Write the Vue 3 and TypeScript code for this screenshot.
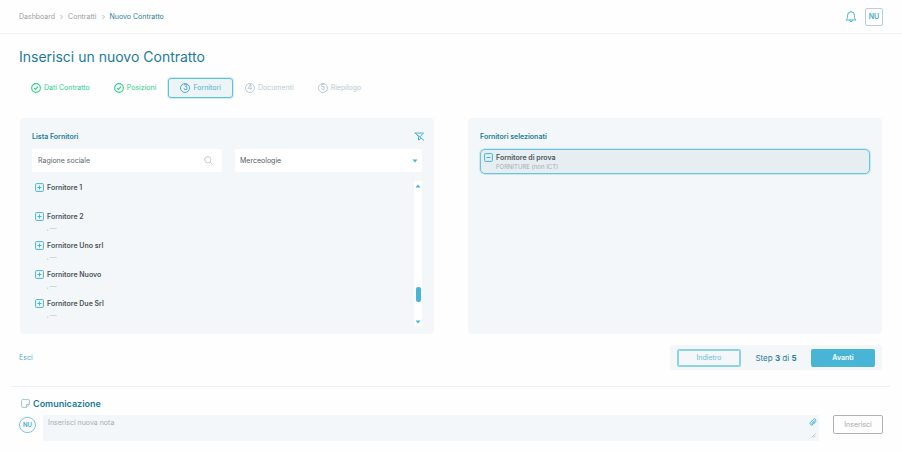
<script setup lang="ts">
import { ref } from 'vue'

interface Step {
  label: string
  state: 'done' | 'active' | 'todo'
}

interface Supplier {
  name: string
  detail: string
}

const steps: Step[] = [
  { label: 'Dati Contratto', state: 'done' },
  { label: 'Posizioni', state: 'done' },
  { label: 'Fornitori', state: 'active' },
  { label: 'Documenti', state: 'todo' },
  { label: 'Riepilogo', state: 'todo' },
]

const suppliers: Supplier[] = [
  { name: 'Fornitore 1', detail: '' },
  { name: 'Fornitore 2', detail: ', ---' },
  { name: 'Fornitore Uno srl', detail: ', ---' },
  { name: 'Fornitore Nuovo', detail: ', ---' },
  { name: 'Fornitore Due Srl', detail: ', ---' },
]

const selected: Supplier[] = [{ name: 'Fornitore di prova', detail: 'FORNITURE (non ICT)' }]

const search = ref('')
const category = ref('Merceologie')
const note = ref('')
</script>

<template>
  <div class="page">
    <header class="topbar">
      <nav class="crumbs" aria-label="Percorso">
        <a href="#">Dashboard</a>
        <svg class="chevron" viewBox="0 0 4 6"><path d="M1 1l2 2-2 2" /></svg>
        <a href="#">Contratti</a>
        <svg class="chevron" viewBox="0 0 4 6"><path d="M1 1l2 2-2 2" /></svg>
        <a href="#" class="current">Nuovo Contratto</a>
      </nav>
      <div class="account">
        <button class="plain" aria-label="Notifiche">
          <svg class="bell" viewBox="0 0 12 13">
            <path d="M1 10h10c-1-1-1.600-2-1.600-3.200V5.200a3.400 3.400 0 0 0-6.800 0v1.600C2.600 8 2 9 1 10z" />
            <path d="M6 1.700V.7M4.600 10.200a1.400 1.400 0 0 0 2.800 0" />
          </svg>
        </button>
        <button class="initials">NU</button>
      </div>
    </header>

    <main class="content">
      <h1>Inserisci un nuovo Contratto</h1>

      <ol class="steps">
        <li v-for="(step, i) in steps" :key="step.label" class="step" :class="step.state">
          <svg v-if="step.state === 'done'" class="step-icon" viewBox="0 0 11 11">
            <circle cx="5.500" cy="5.500" r="4.800" />
            <path d="M3.300 5.600l1.600 1.500 2.800-3" />
          </svg>
          <span v-else class="step-number">{{ i + 1 }}</span>
          <span>{{ step.label }}</span>
        </li>
      </ol>

      <div class="panels">
        <section class="panel">
          <div class="panel-head">
            <h2>Lista Fornitori</h2>
            <button class="plain" aria-label="Rimuovi filtri">
              <svg class="filter" viewBox="0 0 11 9">
                <path d="M1 1l9 7.500M.5 1h9L6.300 4.700M3 2.700l1.500 2v3.300l2-1.200v-.6" />
              </svg>
            </button>
          </div>
          <div class="filters">
            <div class="field search">
              <input v-model="search" type="text" placeholder="Ragione sociale" aria-label="Ragione sociale" />
              <svg class="lens" viewBox="0 0 9 9">
                <circle cx="3.800" cy="3.800" r="3.100" />
                <path d="M6.100 6.100l2.400 2.400" />
              </svg>
            </div>
            <div class="field category">
              <select v-model="category" aria-label="Merceologie">
                <option>Merceologie</option>
              </select>
              <svg class="caret" viewBox="0 0 6 4"><path d="M.5.500h5L3 3.500z" /></svg>
            </div>
          </div>
          <div class="list-area">
            <ul class="suppliers">
              <li v-for="s in suppliers" :key="s.name" class="supplier">
                <button class="plain" :aria-label="'Aggiungi ' + s.name">
                  <svg class="box-icon" viewBox="0 0 9 9">
                    <rect x=".6" y=".6" width="7.800" height="7.800" rx=".8" />
                    <path d="M2.500 4.500h4M4.500 2.500v4" />
                  </svg>
                </button>
                <div>
                  <div class="name">{{ s.name }}</div>
                  <div class="dashes">{{ s.detail }}</div>
                </div>
              </li>
            </ul>
            <div class="scrollbar" aria-hidden="true">
              <svg class="arrow" viewBox="0 0 6 4"><path d="M.5 3.500h5L3 .5z" /></svg>
              <span class="thumb"></span>
              <svg class="arrow" viewBox="0 0 6 4"><path d="M.5.500h5L3 3.500z" /></svg>
            </div>
          </div>
        </section>

        <section class="panel">
          <div class="panel-head">
            <h2>Fornitori selezionati</h2>
          </div>
          <div v-for="s in selected" :key="s.name" class="chosen">
            <button class="plain" :aria-label="'Rimuovi ' + s.name">
              <svg class="box-icon" viewBox="0 0 9 9">
                <rect x=".6" y=".6" width="7.800" height="7.800" rx=".8" />
                <path d="M2.500 4.500h4" />
              </svg>
            </button>
            <div>
              <div class="name">{{ s.name }}</div>
              <div class="detail">{{ s.detail }}</div>
            </div>
          </div>
        </section>
      </div>

      <div class="actions">
        <a href="#" class="exit">Esci</a>
        <div class="pager">
          <button class="back">Indietro</button>
          <span class="progress">Step <b>3</b> di <b>5</b></span>
          <button class="next">Avanti</button>
        </div>
      </div>
    </main>

    <section class="notes">
      <h2 class="notes-title">
        <svg class="note-icon" viewBox="0 0 9 9">
          <path d="M1.400.6h6.200q.8 0 .8.800v4L5.400 8.400h-4Q.6 8.400.6 7.600V1.400Q.6.600 1.400.6zM8.400 5.400h-3v3" />
        </svg>
        Comunicazione
      </h2>
      <div class="note-row">
        <span class="avatar">NU</span>
        <div class="note-box">
          <textarea v-model="note" rows="2" placeholder="Inserisci nuova nota" aria-label="Inserisci nuova nota"></textarea>
          <div class="note-tools">
            <button class="plain" aria-label="Allega file">
              <svg class="clip" viewBox="0 0 8 8">
                <path d="M6.800 3.700L4 6.500a1.500 1.500 0 0 1-2.500-2.200l3-3a1.300 1.300 0 0 1 2 1.800L3.800 5.700a.5.500 0 0 1-.8-.8l2.200-2.200" />
              </svg>
            </button>
            <svg class="grip" viewBox="0 0 5 5"><path d="M.5 4.500l4-4M2.700 4.500l1.800-1.800" /></svg>
          </div>
        </div>
        <button class="insert">Inserisci</button>
      </div>
    </section>
  </div>
</template>

<style>
body {
  margin: 0;
  background: #fefefe;
}
</style>

<style scoped>
* {
  box-sizing: border-box;
}

.page {
  font-family: Inter, "Liberation Sans", sans-serif;
  font-size: 7px;
  line-height: 10px;
  color: #555b5f;
}

h1,
h2,
ol,
ul {
  margin: 0;
  padding: 0;
  list-style: none;
}

button,
input,
select,
textarea {
  font: inherit;
  color: inherit;
  margin: 0;
  padding: 0;
  border: 0;
  border-radius: 0;
  background: none;
  outline: none;
}

a {
  color: inherit;
  text-decoration: none;
}

svg {
  display: block;
  fill: none;
  stroke: #45b5d6;
  flex: none;
}

.plain {
  display: block;
  flex: none;
}

.topbar {
  display: flex;
  align-items: center;
  justify-content: space-between;
  height: 34px;
  padding: 0 19px;
  border-bottom: 1px solid #edf2f4;
}

.crumbs {
  display: flex;
  align-items: center;
  gap: 4px;
  color: #999fa2;
}

.crumbs .current {
  color: #2a7f9c;
}

.chevron {
  width: 5px;
  height: 6px;
  stroke: #999fa2;
  stroke-width: 0.7;
}

.account {
  display: flex;
  align-items: center;
  gap: 8px;
}

.bell {
  width: 12px;
  height: 13px;
}

.initials {
  width: 18px;
  height: 18px;
  border: 1px solid #b4d0de;
  border-radius: 2px;
  color: #45a9ca;
  font-weight: 600;
}

.content {
  padding: 13px 20px 0 19px;
}

h1 {
  font-size: 14px;
  line-height: 20px;
  font-weight: 400;
  color: #1c7b9a;
}

.steps {
  display: flex;
  margin-top: 11px;
}

.step {
  display: flex;
  align-items: center;
  gap: 3px;
  height: 20px;
  padding: 0 11px;
  border: 1px solid transparent;
  border-radius: 3px;
  color: #b9cbd4;
}

.step-icon {
  width: 10px;
  height: 10px;
  stroke: #2fd08c;
  stroke-width: 1.2;
}

.step-number {
  width: 10px;
  height: 10px;
  border: 1px solid currentColor;
  border-radius: 50%;
  line-height: 8px;
  text-align: center;
  font-weight: 600;
}

.step.done {
  color: #2fd08c;
}

.step.active {
  color: #55acc9;
  background: #edf4f7;
  border-color: #5dc0dd;
  box-shadow: 0 0 0 1px #d5eef6;
}

.panels {
  display: grid;
  grid-template-columns: 1fr 1fr;
  gap: 34px;
  margin: 20px 0 0 1px;
}

.panel {
  padding: 12px 12px 8px;
  border-radius: 4px;
  background: #f3f7fa;
}

.panel-head {
  display: flex;
  align-items: center;
  justify-content: space-between;
  height: 13px;
  margin-right: -3px;
}

h2 {
  font-size: 7px;
  line-height: 13px;
  font-weight: 600;
  color: #1c7b9a;
}

.filter {
  width: 11px;
  height: 9px;
}

.filters {
  display: grid;
  grid-template-columns: 190fr 187fr;
  gap: 13px;
  margin-top: 6px;
}

.field {
  display: flex;
  align-items: center;
  height: 23px;
  border-radius: 2px;
  background: #fff;
}

.search {
  padding: 0 9px 0 6px;
}

.category {
  padding: 0 4px 0 5px;
}

.field input,
.field select {
  flex: 1;
  min-width: 0;
  height: 100%;
  appearance: none;
}

.field input::placeholder {
  color: #62686b;
  opacity: 1;
}

.lens {
  width: 9px;
  height: 9px;
  stroke: #b9bfc2;
  stroke-width: 0.8;
}

.caret,
.arrow {
  width: 6px;
  height: 4px;
  stroke: none;
  fill: #45b5d6;
}

.list-area {
  display: flex;
  justify-content: space-between;
  margin-top: 9px;
}

.suppliers {
  padding-left: 3px;
}

.supplier {
  display: flex;
  align-items: flex-start;
  gap: 3px;
  height: 29px;
  padding-top: 2px;
}

.box-icon {
  width: 9px;
  height: 9px;
}

.name {
  line-height: 10px;
  font-weight: 600;
  color: #4c5458;
}

.dashes {
  margin-top: 2px;
  font-size: 5px;
  line-height: 8px;
  font-weight: 600;
  color: #a3a9ac;
}

.scrollbar {
  display: flex;
  flex-direction: column;
  align-items: center;
  justify-content: space-between;
  width: 8px;
  padding: 3px 0 2px;
  border-radius: 1px;
  background: #fff;
}

.thumb {
  width: 5px;
  height: 15px;
  margin-top: 80px;
  border-radius: 2px;
  background: #48b5d7;
}

.chosen {
  display: flex;
  align-items: flex-start;
  gap: 3px;
  height: 25px;
  margin-top: 6px;
  padding: 3px;
  border: 1px solid #68c5df;
  border-radius: 5px;
  box-shadow: 0 0 0 1px #c9e8f2;
  background: #e6eef2;
}

.detail {
  font-size: 6px;
  line-height: 8px;
  color: #a5acb0;
}

.actions {
  display: flex;
  align-items: center;
  justify-content: space-between;
  margin-top: 11px;
}

.exit {
  color: #4aaccb;
}

.pager {
  display: flex;
  align-items: center;
  justify-content: space-between;
  width: 212px;
  height: 25px;
  padding: 0 8px;
  border-radius: 3px;
  background: #f3f7fa;
}

.back,
.next {
  width: 62px;
  height: 16px;
  border-radius: 1px;
  box-shadow: 0 0 0 1px #8dd1e5;
  color: #6dbbd5;
}

.back {
  border: 1px solid #8dd1e5;
}

.next {
  background: #48b5d7;
  box-shadow: 0 0 0 1px #48b5d7;
  color: #fff;
  font-weight: 600;
}

.progress {
  font-size: 8px;
  color: #2c7d99;
}

.notes {
  margin: 16px 12px 0;
  padding: 10px 7px 12px;
  border-top: 1px solid #edf1f3;
}

.notes-title {
  display: flex;
  align-items: center;
  gap: 3px;
  padding-left: 2px;
  font-size: 9px;
}

.note-icon {
  width: 9px;
  height: 9px;
  stroke: #86b6c8;
  stroke-width: 0.8;
}

.note-row {
  display: flex;
  align-items: flex-start;
  margin-top: 5px;
}

.avatar {
  width: 17px;
  height: 16px;
  margin-top: 2px;
  border: 1px solid #74c8df;
  border-radius: 8px;
  font-size: 6px;
  line-height: 14px;
  font-weight: 600;
  text-align: center;
  color: #45a9ca;
}

.note-box {
  display: flex;
  flex: 1;
  height: 26px;
  margin: 0 14px 0 7px;
  padding: 3px 2px 3px 5px;
  border-radius: 1px;
  background: #f3f7fa;
}

.note-box textarea {
  flex: 1;
  resize: none;
}

.note-box textarea::placeholder {
  color: #a5adb2;
  opacity: 1;
}

.note-tools {
  display: flex;
  flex-direction: column;
  align-items: center;
  justify-content: space-between;
}

.clip {
  width: 8px;
  height: 8px;
}

.grip {
  width: 5px;
  height: 5px;
  stroke: #a9aeb1;
  stroke-width: 0.7;
}

.insert {
  width: 50px;
  height: 19px;
  border: 1px solid #aeb2b4;
  border-radius: 2px;
  color: #a3a8ab;
}
</style>
